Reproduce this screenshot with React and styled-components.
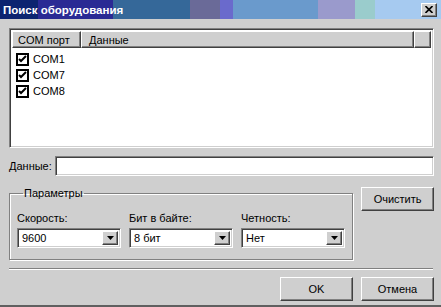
import React from 'react';
import styled, { createGlobalStyle, css } from 'styled-components';

const GlobalStyle = createGlobalStyle`
  html, body {
    margin: 0;
    padding: 0;
    background: #cfcfcf;
  }
  body {
    font-family: "Liberation Sans", Arial, sans-serif;
    font-size: 11px;
    color: #000;
  }
`;

const raised = css`
  border: 1px solid;
  border-color: #ffffff #404040 #404040 #ffffff;
  box-shadow: inset -1px -1px 0 #808080, inset 1px 1px 0 #cfcfcf;
`;

const sunken = css`
  border: 1px solid;
  border-color: #808080 #ffffff #ffffff #808080;
  box-shadow: inset 1px 1px 0 #404040, inset -1px -1px 0 #cfcfcf;
`;

const Window = styled.div`
  width: 441px;
  height: 307px;
  box-sizing: border-box;
  background: #cfcfcf;
  display: flex;
  flex-direction: column;
  border-bottom: 2px solid #606060;
  overflow: hidden;
`;

const TitleBar = styled.div`
  height: 19px;
  flex: none;
  display: flex;
  align-items: center;
  justify-content: space-between;
  padding: 0 4px 0 3px;
  background: linear-gradient(
    to right,
    #0c2470 0px, #0c2470 38px,
    #2a2a94 38px, #2a2a94 113px,
    #356899 113px, #356899 190px,
    #6a6a98 190px, #6a6a98 220px,
    #6a6acc 220px, #6a6acc 233px,
    #6a9acc 233px, #6a9acc 318px,
    #9a9acc 318px, #9a9acc 355px,
    #9acccc 355px, #9acccc 375px,
    #a6caf0 375px
  );
`;

const Title = styled.span`
  color: #fff;
  font-weight: bold;
  font-size: 11.5px;
`;

const CloseButton = styled.div`
  width: 16px;
  height: 14px;
  box-sizing: border-box;
  background: #cfcfcf;
  ${raised};
  display: flex;
  align-items: center;
  justify-content: center;
`;

const Content = styled.div`
  flex: 1;
  display: flex;
  flex-direction: column;
  padding: 9px 7px 0 9px;
`;

const ListView = styled.div`
  height: 120px;
  box-sizing: border-box;
  background: #fff;
  ${sunken};
  padding: 2px;
  display: flex;
  flex-direction: column;
`;

const HeaderRow = styled.div`
  display: flex;
  height: 17px;
  flex: none;
`;

const HeaderCell = styled.div`
  box-sizing: border-box;
  width: ${(p) => p.$w};
  flex: ${(p) => (p.$grow ? 1 : 'none')};
  background: #cfcfcf;
  ${raised};
  padding-left: ${(p) => p.$pad || 5}px;
  display: flex;
  align-items: center;
  white-space: nowrap;
`;

const Rows = styled.div`
  padding: 3px 0 0 4px;
  display: flex;
  flex-direction: column;
`;

const Row = styled.div`
  height: 16px;
  display: flex;
  align-items: center;
  gap: 4px;
`;

const CheckBox = styled.div`
  width: 13px;
  height: 13px;
  box-sizing: border-box;
  border: 2px solid #000;
  background: #fff;
  display: flex;
  align-items: center;
  justify-content: center;
`;

const DataRow = styled.div`
  margin-top: 8px;
  display: flex;
  align-items: center;
  gap: 3px;
`;

const Label = styled.span`
  white-space: nowrap;
`;

const TextInput = styled.div`
  flex: 1;
  height: 20px;
  box-sizing: border-box;
  background: #fff;
  ${sunken};
`;

const ParamsRow = styled.div`
  margin-top: 11px;
  display: flex;
  align-items: flex-start;
  gap: 8px;
`;

const GroupBox = styled.fieldset`
  margin: 0;
  width: 345px;
  height: 73px;
  box-sizing: border-box;
  border: 1px solid #808080;
  box-shadow: 1px 1px 0 #fff, inset 1px 1px 0 #fff;
  padding: 12px 7px 0 7px;
  min-width: 0;
`;

const Legend = styled.legend`
  padding: 0 1px;
  margin-left: 6px;
  font-size: 11px;
  line-height: 13px;
`;

const Fields = styled.div`
  display: grid;
  grid-template-columns: 104px 104px 104px;
  column-gap: 8px;
`;

const Field = styled.div`
  display: flex;
  flex-direction: column;
  gap: 4px;
`;

const Select = styled.div`
  height: 20px;
  box-sizing: border-box;
  background: #fff;
  ${sunken};
  display: flex;
  align-items: stretch;
  padding: 2px;
`;

const SelectValue = styled.div`
  flex: 1;
  display: flex;
  align-items: center;
  padding-left: 2px;
`;

const DropButton = styled.div`
  width: 16px;
  box-sizing: border-box;
  background: #cfcfcf;
  ${raised};
  display: flex;
  align-items: center;
  justify-content: center;
`;

const Button = styled.div`
  width: 73px;
  height: 24px;
  box-sizing: border-box;
  background: #cfcfcf;
  ${raised};
  display: flex;
  align-items: center;
  justify-content: center;
`;

const Separator = styled.div`
  margin-top: 8px;
  margin-right: 1px;
  height: 0;
  border-top: 1px solid #808080;
  border-bottom: 1px solid #fff;
`;

const Footer = styled.div`
  margin-top: 7px;
  display: flex;
  justify-content: flex-end;
  gap: 8px;
`;

const Check = () => (
  <svg width="9" height="9" viewBox="0 0 9 9">
    <path d="M1 4 L3 6 L8 1" stroke="#000" strokeWidth="2" fill="none" />
  </svg>
);

const Arrow = () => (
  <svg width="7" height="4" viewBox="0 0 7 4">
    <path d="M0 0 H7 L3.5 4 Z" fill="#000" />
  </svg>
);

const ports = ['COM1', 'COM7', 'COM8'];

const fields = [
  { label: 'Скорость:', value: '9600' },
  { label: 'Бит в байте:', value: '8 бит' },
  { label: 'Четность:', value: 'Нет' },
];

export default function App() {
  return (
    <Window>
      <GlobalStyle />
      <TitleBar>
        <Title>Поиск оборудования</Title>
        <CloseButton>
          <svg width="8" height="7" viewBox="0 0 8 7">
            <path d="M0.5 0 L7.5 7 M7.5 0 L0.5 7" stroke="#000" strokeWidth="1.6" />
          </svg>
        </CloseButton>
      </TitleBar>
      <Content>
        <ListView>
          <HeaderRow>
            <HeaderCell $w="69px">COM порт</HeaderCell>
            <HeaderCell $grow $pad={7}>Данные</HeaderCell>
            <HeaderCell $w="17px" />
          </HeaderRow>
          <Rows>
            {ports.map((p) => (
              <Row key={p}>
                <CheckBox>
                  <Check />
                </CheckBox>
                {p}
              </Row>
            ))}
          </Rows>
        </ListView>
        <DataRow>
          <Label>Данные:</Label>
          <TextInput />
        </DataRow>
        <ParamsRow>
          <GroupBox>
            <Legend>Параметры</Legend>
            <Fields>
              {fields.map((f) => (
                <Field key={f.label}>
                  <Label>{f.label}</Label>
                  <Select>
                    <SelectValue>{f.value}</SelectValue>
                    <DropButton>
                      <Arrow />
                    </DropButton>
                  </Select>
                </Field>
              ))}
            </Fields>
          </GroupBox>
          <Button>Очистить</Button>
        </ParamsRow>
        <Separator />
        <Footer>
          <Button>OK</Button>
          <Button>Отмена</Button>
        </Footer>
      </Content>
    </Window>
  );
}
